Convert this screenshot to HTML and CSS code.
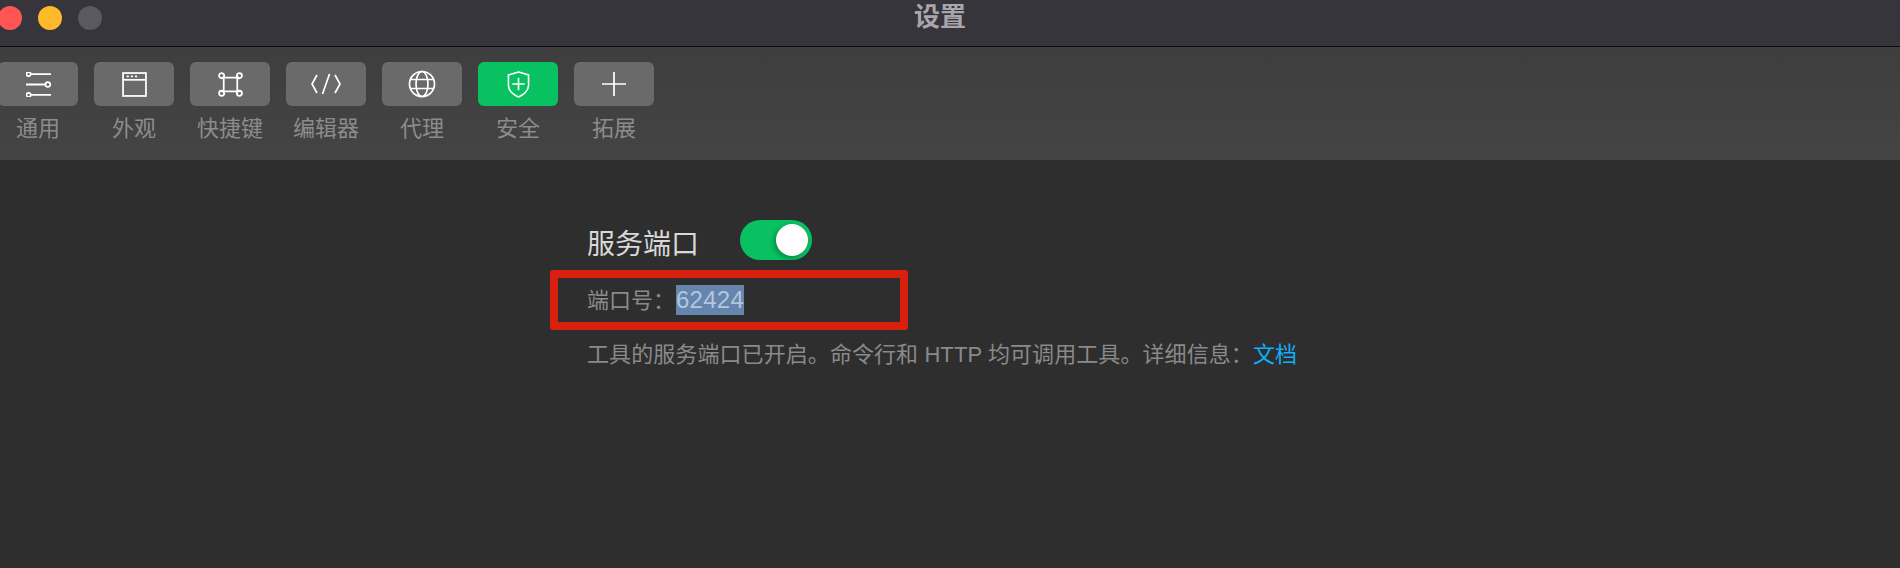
FILE: index.html
```html
<!DOCTYPE html>
<html lang="zh-CN">
  <head>
    <meta charset="UTF-8" />
    <title>设置</title>
    <link rel="stylesheet" href="styles.css">
  </head>
  <body>
    <header class="titlebar">
      <div class="lights">
        <span class="light red"></span>
        <span class="light yellow"></span>
        <span class="light grey"></span>
      </div>
      <div class="title">设置</div>
    </header>

    <nav class="toolbar">
      <div class="tab">
        <div class="tab-btn">
          <svg viewBox="0 0 24 24" width="25" height="25"><path d="M4.500 2H24M0 12H18.500M4.500 22H24"/><circle cx="2.500" cy="2" r="2"/><circle cx="21" cy="12" r="2.300"/><circle cx="2.500" cy="22" r="2"/></svg>
        </div>
        <span>通用</span>
      </div>
      <div class="tab">
        <div class="tab-btn">
          <svg viewBox="0 0 24 24" width="25" height="25"><rect x="1" y="1" width="22" height="22"/><path d="M1 7.500H23"/><path d="M4.500 4.200H6.500M8.500 4.200H10.500M12.500 4.200H14.500"/></svg>
        </div>
        <span>外观</span>
      </div>
      <div class="tab">
        <div class="tab-btn">
          <svg viewBox="0 0 24 24" width="25" height="25"><path d="M5.500 3.500V20.500M18.500 3.500V20.500M3.500 5.500H20.500M3.500 18.500H20.500"/><circle cx="3.500" cy="3.500" r="2.500"/><circle cx="20.500" cy="3.500" r="2.500"/><circle cx="3.500" cy="20.500" r="2.500"/><circle cx="20.500" cy="20.500" r="2.500"/></svg>
        </div>
        <span>快捷键</span>
      </div>
      <div class="tab">
        <div class="tab-btn">
          <svg viewBox="0 0 30 22" width="30" height="22"><path d="M6 2L1 11L6 20M24 2L29 11L24 20M18.500 1L11.500 21"/></svg>
        </div>
        <span>编辑器</span>
      </div>
      <div class="tab">
        <div class="tab-btn">
          <svg viewBox="0 0 28 28" width="28" height="28"><circle cx="14" cy="14" r="12.500"/><ellipse cx="14" cy="14" rx="6" ry="12.500"/><path d="M2.500 9.500H25.500M2.500 18.500H25.500"/></svg>
        </div>
        <span>代理</span>
      </div>
      <div class="tab active">
        <div class="tab-btn">
          <svg viewBox="0 0 24 28" width="23" height="27"><path d="M12 1L22.500 4V15C22.500 20.500 17 25 12 27C7 25 1.500 20.500 1.500 15V4Z"/><path d="M12 7V20M5.500 13.500H18.500"/></svg>
        </div>
        <span>安全</span>
      </div>
      <div class="tab">
        <div class="tab-btn">
          <svg viewBox="0 0 24 24" width="24" height="24"><path d="M12 0V24M0 12H24"/></svg>
        </div>
        <span>拓展</span>
      </div>
    </nav>

    <main class="content">
      <div class="server-row">
        <h2>服务端口</h2>
        <div class="toggle"><div class="knob"></div></div>
      </div>
      <div class="port-row">
        <div class="mark"></div>
        端口号：<span class="port-no">62424</span>
      </div>
      <p class="note">工具的服务端口已开启。命令行和 HTTP 均可调用工具。详细信息：<a href="#">文档</a></p>
    </main>
  </body>
</html>
```

FILE: styles.css
```css
body {
  margin: 0;
  height: 568px;
  overflow: hidden;
  background-color: #2e2e2e;
  font-family: "Liberation Sans", "Noto Sans CJK SC", sans-serif;
}

.titlebar {
  height: 46px;
  background-color: #37353c;
  border-bottom: 1px solid #0c0c0c;
  display: flex;
  align-items: flex-start;
  justify-content: center;
  position: relative;
}

.lights {
  position: absolute;
  left: -2px;
  top: 6px;
  display: flex;
  gap: 16px;
}

.light {
  width: 24px;
  height: 24px;
  border-radius: 50%;
}

.red {
  background-color: #ff5655;
}

.yellow {
  background-color: #ffb92b;
}

.grey {
  background-color: #5a5860;
}

.title {
  font-size: 26px;
  font-weight: 700;
  line-height: 34px;
  color: #a8a6ac;
  margin-right: 20px;
}

.toolbar {
  height: 113px;
  box-sizing: border-box;
  padding-top: 15px;
  margin-left: -2px;
  background: linear-gradient(#3e3e3e, #444444);
  display: flex;
  gap: 16px;
}

.tab {
  width: 80px;
  display: flex;
  flex-direction: column;
  align-items: center;
  gap: 9px;
  color: #8c8c8c;
  font-size: 22px;
  line-height: 28px;
}

.tab-btn {
  width: 80px;
  height: 44px;
  border-radius: 6px;
  background-color: #6a6a6a;
  display: flex;
  align-items: center;
  justify-content: center;
}

.active .tab-btn {
  background-color: #08c160;
}

.tab-btn svg {
  fill: none;
  stroke: #fff;
  stroke-width: 1.7;
}

.content {
  padding: 58px 0 0 587px;
}

.server-row {
  display: flex;
  align-items: center;
  gap: 41px;
  height: 44px;
}

.server-row h2 {
  margin: 0;
  padding-top: 3px;
  font-size: 28px;
  font-weight: 400;
  color: #d8d8d8;
}

.toggle {
  width: 72px;
  height: 40px;
  border-radius: 20px;
  background-color: #08c160;
  display: flex;
  align-items: center;
  justify-content: flex-end;
  padding-right: 4px;
  box-sizing: border-box;
}

.knob {
  width: 32px;
  height: 32px;
  border-radius: 50%;
  background-color: #fff;
  box-shadow: -2px 2px 5px rgba(0, 0, 0, 0.3);
}

.port-row {
  position: relative;
  margin-top: 19px;
  height: 40px;
  line-height: 40px;
  font-size: 22px;
  color: #8a8a8a;
}

/* 赤い注釈の枠 */
.mark {
  position: absolute;
  left: -37px;
  top: -11px;
  width: 358px;
  height: 60px;
  box-sizing: border-box;
  border: 8px solid #d9200e;
  border-radius: 3px;
}

.port-no {
  display: inline-block;
  margin-left: 1px;
  font-size: 24px;
  line-height: 30px;
  letter-spacing: 0.25px;
  background-color: #6585ae;
  color: #b4c6dc;
}

.note {
  margin: 18px 0 0;
  font-size: 22px;
  line-height: 32px;
  letter-spacing: 0.08px;
  color: #8a8a8a;
}

.note a {
  color: #10aeff;
  text-decoration: none;
}
```
